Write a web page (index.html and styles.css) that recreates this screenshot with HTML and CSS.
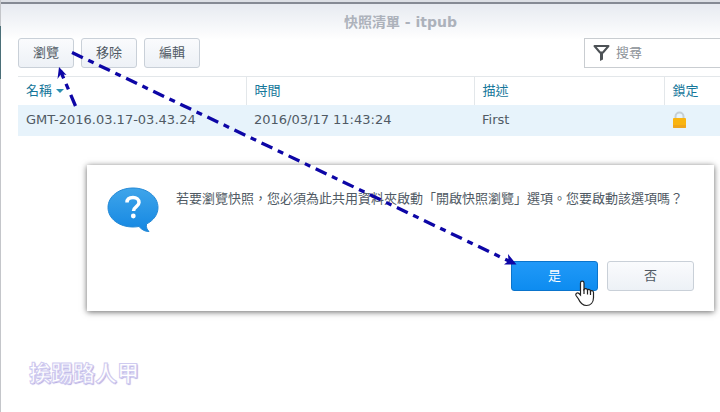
FILE: index.html
```html
<!DOCTYPE html>
<html lang="zh-Hant">
<head>
    <meta charset="UTF-8">
    <meta name="viewport" content="width=device-width, initial-scale=1.0">
    <title>快照清單 - itpub</title>
    <link rel="stylesheet" href="styles.css">
</head>
<body>
    <div class="window">
        <h1 class="window-title">快照清單 - itpub</h1>

        <div class="toolbar">
            <button type="button" class="btn">瀏覽</button>
            <button type="button" class="btn">移除</button>
            <button type="button" class="btn">編輯</button>
            <label class="search">
                <svg class="search-icon" width="17" height="18" viewBox="0 0 17 18" aria-hidden="true">
                    <path d="M1.500 2h14L10 8.500H7z" fill="none" stroke="#4d5256" stroke-width="2" stroke-linejoin="round"/>
                    <path d="M7 8h3v7.500L7 17z" fill="#4d5256"/>
                </svg>
                <input type="text" placeholder="搜尋" aria-label="搜尋">
            </label>
        </div>

        <table class="snapshots">
            <colgroup>
                <col class="col-name">
                <col class="col-time">
                <col class="col-desc">
                <col>
            </colgroup>
            <thead>
                <tr>
                    <th>名稱<span class="sort"></span></th>
                    <th>時間</th>
                    <th>描述</th>
                    <th>鎖定</th>
                </tr>
            </thead>
            <tbody>
                <tr>
                    <td>GMT-2016.03.17-03.43.24</td>
                    <td>2016/03/17 11:43:24</td>
                    <td>First</td>
                    <td>
                        <svg class="lock" width="15" height="18" viewBox="0 0 15 18" aria-hidden="true">
                            <path d="M3.500 9V5.500a4 4 0 0 1 8 0V9" fill="none" stroke="#c6cfd4" stroke-width="2"/>
                            <rect x="1" y="7" width="13" height="10" rx="1" fill="#f9b410"/>
                            <path d="M1 14h13v2a1 1 0 0 1-1 1H2a1 1 0 0 1-1-1z" fill="#efa51c"/>
                        </svg>
                    </td>
                </tr>
            </tbody>
        </table>

        <p class="watermark">挨踢路人甲</p>
    </div>

    <!-- 確認對話框 -->
    <div class="dialog" role="dialog" aria-labelledby="dialog-text">
        <div class="dialog-body">
            <svg class="bubble" width="52" height="46" viewBox="0 0 52 46" aria-hidden="true">
                <defs>
                    <linearGradient id="bubbleFill" x1="0" y1="0" x2="0" y2="1">
                        <stop offset="0" stop-color="#3fa5ea"/>
                        <stop offset="1" stop-color="#1487e2"/>
                    </linearGradient>
                </defs>
                <path d="M26 1C12 1 1 9.500 1 20.500S12 40 26 40c2 0 4-.2 6-.5 3 3.500 6 5 10 5-2-2-3-4-2.500-7.500C46.500 33.500 51 27.500 51 20.500 51 9.500 40 1 26 1z" fill="url(#bubbleFill)" stroke="#2489d6" stroke-width="1"/>
                <path d="M20 15.500c0-3.500 2.500-5 6-5s6 1.800 6 5c0 4-5.500 4.200-5.500 8.500" fill="none" stroke="#fff" stroke-width="3.500"/>
                <circle cx="26.300" cy="29" r="2.400" fill="#fff"/>
            </svg>
            <p id="dialog-text">若要瀏覽快照，您必須為此共用資料夾啟動「開啟快照瀏覽」選項。您要啟動該選項嗎？</p>
        </div>
        <div class="dialog-actions">
            <button type="button" class="btn btn-primary">是</button>
            <button type="button" class="btn">否</button>
        </div>
    </div>

    <!-- 操作步驟箭頭與游標 -->
    <svg class="steps" width="720" height="412" viewBox="0 0 720 412" aria-hidden="true">
        <g fill="none" stroke="#0d06a6" stroke-width="3.300">
            <path d="M72 52.500L511 262" stroke-dasharray="12 6 6 6"/>
            <path d="M75.500 106L60.500 71" stroke-dasharray="12 6 6 6"/>
        </g>
        <g fill="#0d06a6">
            <path d="M516.500 264.500l-12.500 0 4.500-3.500-.5-7z"/>
            <path d="M59 67l7.500 8-5.500-1-3.500 5z"/>
        </g>
        <path d="M580.500 283c0-2.500 3.500-2.500 3.500 0v6.500c1-1.500 3-1 3.500.5 1-1 3-.5 3 1 1-1 3-.3 3 1.500v5c0 5-3 8-7 8-4.500 0-6.500-3-8-6.500l-2.500-3.500c-1-2 1.500-3.500 3-2l1.500 1.500z" fill="#fff" stroke="#222" stroke-width="1.200"/>
        <path d="M584 289v5M587.500 290v4.500M590.500 291v4" stroke="#222" stroke-width="1.200"/>
    </svg>
</body>
</html>
```

FILE: styles.css
```css
:root {
    --text-color: #505a64;
    --header-color: #16779a;
    --line-color: #e3e7ea;
    --row-color: #e7f3fb;
    --primary-color: #0d8cf0;
}

* {
    box-sizing: border-box;
}

body {
    margin: 0;
    position: relative;
    min-height: 100vh;
    overflow: hidden;
    font-family: "DejaVu Sans", "Noto Sans CJK TC", sans-serif;
    font-size: 13px;
    line-height: 20px;
    color: var(--text-color);
    background-color: #fff;
}

/* 左邊框露出後方視窗的深色部分 */
.window {
    display: flex;
    flex-direction: column;
    min-height: 100vh;
    padding-left: 17px;
    border-left: 1px solid;
    border-image: linear-gradient(#c4c6ca 27px, #4b6f78 27px, #4b6f78 80px, #c4c6ca 80px) 1;
    box-shadow: inset 0 2px #dcdfe5, inset 0 4px #858a94;
    background: linear-gradient(#e4e8ef, #fff 40px);
}

/* 視窗比畫面寬，標題偏右 */
.window-title {
    margin: 0;
    padding: 12px 0 6px 63px;
    font-size: 14px;
    line-height: 20px;
    font-weight: 700;
    text-align: center;
    color: #adb2bb;
}

.toolbar {
    display: flex;
    gap: 7px;
    margin-bottom: 8px;
}

.btn {
    width: 56px;
    height: 30px;
    padding: 0;
    border: 1px solid #c9d0d8;
    border-radius: 3px;
    font: inherit;
    color: var(--text-color);
    background: linear-gradient(#fafbfd, #edf1f6);
    cursor: pointer;
}

.search {
    display: flex;
    flex: 0 0 136px;
    align-items: center;
    gap: 6px;
    min-width: 0;
    height: 30px;
    margin-left: auto;
    padding-left: 8px;
    border: 1px solid #c9cdd1;
    border-right: 0;
    background-color: #fff;
}

.search-icon {
    flex: none;
}

.search input {
    flex: 1;
    min-width: 0;
    padding: 0;
    border: 0;
    outline: 0;
    font: inherit;
    color: var(--text-color);
    background: none;
}

.search input::placeholder {
    color: #8b9197;
}

.snapshots {
    width: 100%;
    table-layout: fixed;
    border-collapse: collapse;
    border-top: 1px solid var(--line-color);
}

.col-name,
.col-time {
    width: 228px;
}

.col-desc {
    width: 190px;
}

.snapshots th,
.snapshots td {
    padding: 0 8px;
    text-align: left;
    font-weight: 400;
    white-space: nowrap;
}

.snapshots th {
    height: 28px;
    color: var(--header-color);
    border-right: 1px solid var(--line-color);
}

.snapshots th:last-child {
    border-right: 0;
}

.snapshots td {
    height: 31px;
    background-color: var(--row-color);
}

.sort {
    display: inline-block;
    margin-left: 4px;
    border: 4px solid transparent;
    border-top-color: #2b8fb0;
    border-bottom: 0;
    vertical-align: middle;
}

.lock {
    display: block;
}

.watermark {
    margin: auto 0 20px 11px;
    font-size: 22px;
    line-height: 36px;
    font-weight: 700;
    color: #fff;
    -webkit-text-stroke: 1px #cfcbf0;
    text-shadow: 1px 1px 1px #a9a2e0;
}

.dialog {
    position: absolute;
    top: 165px;
    left: 87px;
    right: 6px;
    padding: 22px 20px 20px 20px;
    background-color: #fff;
    box-shadow: 0 1px 6px rgba(0, 0, 0, 0.6);
}

.dialog-body {
    display: flex;
    gap: 17px;
    min-height: 74px;
}

.bubble {
    flex: none;
}

.dialog-body p {
    margin: 0;
    padding-top: 2px;
    white-space: nowrap;
}

.dialog-actions {
    display: flex;
    justify-content: flex-end;
    gap: 9px;
}

.dialog .btn {
    width: 87px;
}

.dialog .btn-primary {
    border-color: #0a74cc;
    color: #fff;
    background: linear-gradient(#2199f8, var(--primary-color));
}

.steps {
    position: absolute;
    top: 0;
    left: 0;
    pointer-events: none;
}
```
